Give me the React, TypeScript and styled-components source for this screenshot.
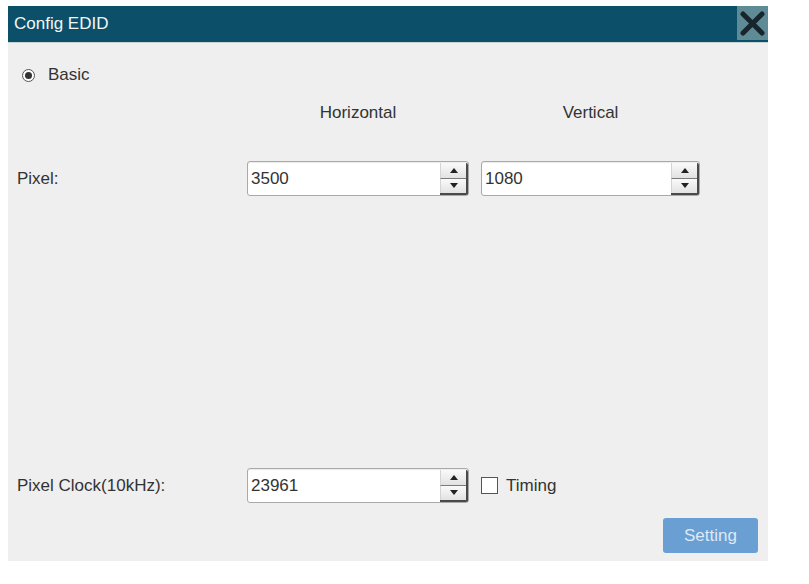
import React from 'react';
import styled, { createGlobalStyle } from 'styled-components';

const GlobalStyle = createGlobalStyle`
  html, body {
    margin: 0;
    padding: 0;
    background: #ffffff;
    font-family: "Liberation Sans", Arial, sans-serif;
  }
`;

const Page = styled.div`
  padding: 6px 0 0 8px;
`;

const Dialog = styled.div`
  width: 760px;
  height: 555px;
  background: #efefef;
  display: flex;
  flex-direction: column;
`;

const TitleBar = styled.div`
  height: 36px;
  background: #0b4f69;
  border-bottom: 1px solid #c9d3d6;
  display: flex;
  align-items: center;
  justify-content: space-between;
  padding-left: 6px;
  color: #f2f6f8;
  font-size: 17px;
`;

const CloseButton = styled.button`
  width: 31px;
  height: 34px;
  margin-top: -2px;
  border: none;
  padding: 0;
  background: #5f8b97;
  display: flex;
  align-items: center;
  justify-content: center;
  cursor: pointer;
`;

const Body = styled.div`
  flex: 1;
  display: flex;
  flex-direction: column;
  padding: 22px 10px 8px 9px;
  color: #333333;
  font-size: 17px;
`;

const RadioRow = styled.label`
  display: flex;
  align-items: center;
  gap: 13px;
  height: 20px;
  padding-left: 5px;
`;

const RadioCircle = styled.span`
  width: 11px;
  height: 11px;
  border-radius: 50%;
  border: 1px solid #555;
  background: #fff;
  display: flex;
  align-items: center;
  justify-content: center;

  &::after {
    content: '';
    width: 7px;
    height: 7px;
    border-radius: 50%;
    background: #333;
  }
`;

const FormGrid = styled.div<{ $top: number }>`
  display: grid;
  grid-template-columns: 218px 222px 219px;
  column-gap: 12px;
  align-items: center;
  margin-top: ${p => p.$top}px;
`;

const ColumnHead = styled.div`
  text-align: center;
  height: 20px;
  line-height: 20px;
`;

const Label = styled.div``;

const Spin = styled.div`
  height: 35px;
  box-sizing: border-box;
  border: 1px solid #a9a9a9;
  border-radius: 3px;
  background: #fff;
  display: flex;
  box-shadow: inset 0 1px 1px rgba(0, 0, 0, 0.08);
`;

const SpinValue = styled.div`
  flex: 1;
  padding-left: 3px;
  display: flex;
  align-items: center;
`;

const SpinButtons = styled.div`
  width: 26px;
  display: flex;
  flex-direction: column;
  border-right: 2px solid #4a4a4a;
  border-bottom: 2px solid #4a4a4a;
  margin: 1px 0 0 0;
  border-radius: 0 2px 2px 0;
`;

const SpinHalf = styled.div<{ $down?: boolean }>`
  flex: 1;
  display: flex;
  align-items: center;
  justify-content: center;
  background: linear-gradient(#fafafa, #e2e2e2);
  border-top: ${p => (p.$down ? '1px solid #7a7a7a' : 'none')};
  border-left: 1px solid #d4d4d4;
`;

const Arrow = styled.span<{ $down?: boolean }>`
  width: 0;
  height: 0;
  border-left: 4px solid transparent;
  border-right: 4px solid transparent;
  ${p => (p.$down ? 'border-top: 5px solid #222;' : 'border-bottom: 5px solid #222;')}
`;

const Spacer = styled.div`
  flex: 1;
`;

const CheckRow = styled.label`
  display: flex;
  align-items: center;
  gap: 8px;
`;

const CheckBox = styled.span`
  width: 15px;
  height: 15px;
  border: 1px solid #555;
  background: #fff;
`;

const Footer = styled.div`
  display: flex;
  justify-content: flex-end;
  margin-top: 15px;
`;

const SettingButton = styled.button`
  width: 95px;
  height: 35px;
  border: none;
  border-radius: 3px;
  background: #6a9fd3;
  color: #dce9f7;
  font-family: "Liberation Sans", Arial, sans-serif;
  font-size: 17px;
`;

const SpinBox: React.FC<{ value: string }> = ({ value }) => (
  <Spin>
    <SpinValue>{value}</SpinValue>
    <SpinButtons>
      <SpinHalf>
        <Arrow />
      </SpinHalf>
      <SpinHalf $down>
        <Arrow $down />
      </SpinHalf>
    </SpinButtons>
  </Spin>
);

const App: React.FC = () => (
  <Page>
    <GlobalStyle />
    <Dialog>
      <TitleBar>
        <span>Config EDID</span>
        <CloseButton aria-label="close">
          <svg width="27" height="27" viewBox="0 0 27 27">
            <path d="M4 4 L23 23 M23 4 L4 23" stroke="#17262c" strokeWidth="5" strokeLinecap="round" />
          </svg>
        </CloseButton>
      </TitleBar>
      <Body>
        <RadioRow>
          <RadioCircle />
          Basic
        </RadioRow>
        <FormGrid $top={18}>
          <div />
          <ColumnHead>Horizontal</ColumnHead>
          <ColumnHead>Vertical</ColumnHead>
        </FormGrid>
        <FormGrid $top={38}>
          <Label>Pixel:</Label>
          <SpinBox value="3500" />
          <SpinBox value="1080" />
        </FormGrid>
        <Spacer />
        <FormGrid $top={0}>
          <Label>Pixel Clock(10kHz):</Label>
          <SpinBox value="23961" />
          <CheckRow>
            <CheckBox />
            Timing
          </CheckRow>
        </FormGrid>
        <Footer>
          <SettingButton>Setting</SettingButton>
        </Footer>
      </Body>
    </Dialog>
  </Page>
);

export default App;
